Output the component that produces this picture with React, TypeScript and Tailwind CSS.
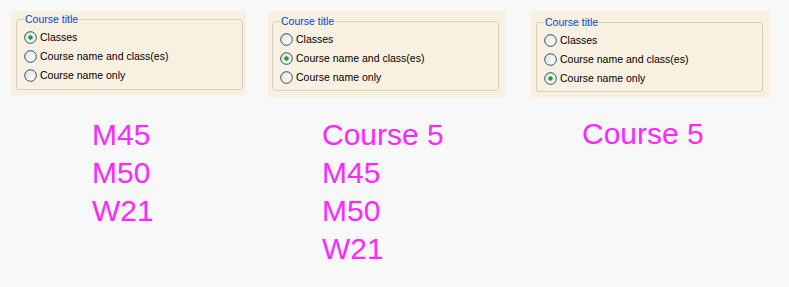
import React from 'react';

const options = ['Classes', 'Course name and class(es)', 'Course name only'];

function Radio({ checked }: { checked: boolean }) {
  return (
    <svg width="13" height="13" viewBox="0 0 13 13" className="shrink-0">
      <defs>
        <linearGradient id="rg" x1="0" y1="0" x2="1" y2="1">
          <stop offset="0" stopColor="#dcd9cf" />
          <stop offset="0.5" stopColor="#f3f2ec" />
          <stop offset="1" stopColor="#ffffff" />
        </linearGradient>
      </defs>
      <circle cx="6.5" cy="6.5" r="5.8" fill="url(#rg)" stroke="#1c5180" strokeWidth="1" />
      {checked && <circle cx="6.5" cy="6.5" r="2.3" fill="#21a121" />}
    </svg>
  );
}

function Panel({ selected, className, fsClass, listClass }: { selected: number; className: string; fsClass: string; listClass: string }) {
  return (
    <div className={`bg-[#f8f0e1] ${className}`}>
      <fieldset className={`border border-[#d6cfbd] rounded-[3px] px-[7px] m-0 min-w-0 ${fsClass}`}>
        <legend className="px-[1px] text-[10.5px] leading-[14px] text-[#0046d5]">Course title</legend>
        <div className={listClass}>
          {options.map((o, i) => (
            <div key={o} className="flex items-center h-[19px] gap-[3px] text-[10.5px] text-black">
              <Radio checked={i === selected} />
              <span>{o}</span>
            </div>
          ))}
        </div>
      </fieldset>
    </div>
  );
}

function Lines({ items, className }: { items: string[]; className: string }) {
  return (
    <div className={`text-[30px] leading-[38px] text-[#ff26ff] ${className}`}>
      {items.map(t => <div key={t}>{t}</div>)}
    </div>
  );
}

export default function App() {
  return (
    <div className="w-[789px] h-[287px] bg-[#f8f8f8] overflow-hidden flex pt-[11px]" style={{ fontFamily: '"Liberation Sans", Arial, sans-serif' }}>
      <div className="ml-[11px] w-[235px] flex flex-col">
        <Panel selected={0} className="h-[84px] pt-[1px] pl-[5px] pr-[3px]" fsClass="pb-[4px]" listClass="pt-[2px]" />
        <Lines items={['M45', 'M50', 'W21']} className="mt-[21px] pl-[81px]" />
      </div>
      <div className="ml-[22px] w-[238px] flex flex-col">
        <Panel selected={1} className="h-[86px] pt-[3px] pl-[4px] pr-[7px]" fsClass="pb-[3px]" listClass="pt-[2px]" />
        <Lines items={['Course 5', 'M45', 'M50', 'W21']} className="mt-[19px] pl-[54px]" />
      </div>
      <div className="ml-[25px] w-[239px] flex flex-col">
        <Panel selected={2} className="h-[87px] pt-[4px] pl-[5px] pr-[7px]" fsClass="pb-[3px]" listClass="pt-[2px]" />
        <Lines items={['Course 5']} className="mt-[17px] pl-[51px]" />
      </div>
    </div>
  );
}
